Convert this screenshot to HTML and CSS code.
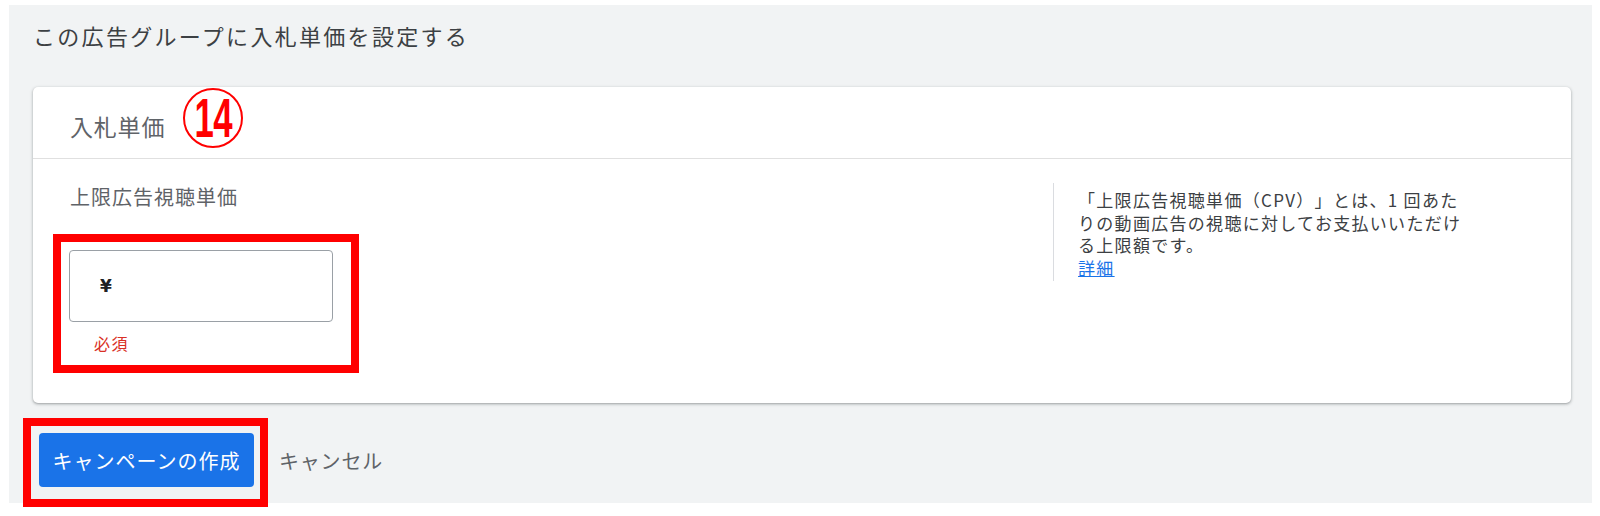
FILE: index.html
```html
<!DOCTYPE html>
<html lang="ja">
<head>
<meta charset="utf-8">
<title>入札単価</title>
<link rel="stylesheet" href="styles.css">
</head>
<body>
<div class="page">
  <h1 class="title">この広告グループに入札単価を設定する</h1>
  <section class="card">
    <div class="card-head">
      <span class="card-title">入札単価</span>
      <span class="badge"><span class="badge-num">14</span></span>
    </div>
    <div class="card-body">
      <div class="field-col">
        <div class="label">上限広告視聴単価</div>
        <div class="field">
          <div class="input"><span class="currency">¥</span></div>
          <div class="req">必須</div>
          <span class="annot annot-field"></span>
        </div>
      </div>
      <aside class="help">
        <p class="help-text">「上限広告視聴単価（CPV）」とは、1 回あた<br>りの動画広告の視聴に対してお支払いいただけ<br>る上限額です。<br><a class="help-link" href="#">詳細</a></p>
      </aside>
    </div>
  </section>
  <div class="actions">
    <div class="primary-wrap">
      <button class="btn-primary" type="button">キャンペーンの作成</button>
      <span class="annot annot-btn"></span>
    </div>
    <button class="btn-text" type="button">キャンセル</button>
  </div>
</div>
</body>
</html>
```
FILE: styles.css
```css
* { box-sizing: border-box; }

html, body {
  margin: 0;
  padding: 0;
  background: #ffffff;
}

body {
  font-family: "Noto Sans CJK JP", "Noto Sans", sans-serif;
  color: #3c4043;
  text-spacing-trim: space-all;
}

.page {
  margin: 5px 8px 13px 9px;
  background: #f1f3f4;
  padding: 15px 21px 16px 24px;
}

.title {
  margin: 0;
  font-size: 22px;
  font-weight: 400;
  line-height: 30px;
  letter-spacing: 2.3px;
  color: #3c4043;
}

.card {
  margin-top: 37px;
  background: #ffffff;
  border-radius: 5px;
  box-shadow: 0 1px 2px 0 rgba(60, 64, 67, 0.3), 0 1px 3px 1px rgba(60, 64, 67, 0.15);
}

.card-head {
  height: 72px;
  display: flex;
  align-items: center;
  padding-left: 37px;
  border-bottom: 1px solid #e0e0e0;
}

.card-title {
  font-size: 23px;
  letter-spacing: 0.8px;
  line-height: 30px;
  color: #5f6368;
  padding-top: 6px;
}

.badge {
  margin-left: 18px;
  margin-top: -10px;
  width: 60px;
  height: 60px;
  border: 2px solid #ff0000;
  border-radius: 50%;
  display: flex;
  align-items: center;
  justify-content: center;
}

.badge-num {
  font-family: "Liberation Sans", Arial, sans-serif;
  font-weight: 700;
  font-size: 56px;
  line-height: 1;
  color: #ff0000;
  transform: scaleX(0.62);
  letter-spacing: -1px;
}

.card-body {
  display: grid;
  grid-template-columns: 1fr 518px;
  padding: 25px 0 49px 37px;
}

.label {
  font-size: 20px;
  letter-spacing: 1px;
  line-height: 26px;
  color: #5f6368;
}

.field {
  position: relative;
  width: 264px;
  margin-top: 40px;
  margin-left: -1px;
}

.input {
  height: 72px;
  border: 1px solid #9aa0a6;
  border-radius: 4px;
  display: flex;
  align-items: center;
  padding-left: 30px;
}

.currency {
  font-family: "DejaVu Sans", "Noto Sans", sans-serif;
  font-size: 17px;
  font-weight: 700;
  color: #202124;
}

.req {
  margin-top: 10px;
  padding-left: 25px;
  font-size: 16px;
  letter-spacing: 1.5px;
  line-height: 22px;
  color: #d93025;
}

.annot {
  position: absolute;
  border: 8px solid #ff0000;
  pointer-events: none;
}

.annot-field {
  left: -16px;
  top: -16px;
  right: -26px;
  bottom: -19px;
}

.help {
  align-self: start;
  margin-top: -1px;
  border-left: 1px solid #dadce0;
  padding: 6px 0 2px 24px;
}

.help-text {
  margin: 0;
  font-size: 17px;
  letter-spacing: 1.3px;
  line-height: 22.5px;
  color: #3c4043;
}

.help-link {
  color: #1a73e8;
  text-decoration: underline;
}

.actions {
  margin-top: 30px;
  display: flex;
  align-items: center;
}

.primary-wrap {
  position: relative;
  margin-left: 6px;
}

.btn-primary {
  display: block;
  width: 215px;
  height: 54px;
  border: none;
  border-radius: 4px;
  background: #1a73e8;
  color: #ffffff;
  font-family: "Noto Sans CJK JP", "Noto Sans", sans-serif;
  font-size: 20px;
  letter-spacing: 1px;
  padding: 0;
  cursor: pointer;
}

.annot-btn {
  left: -16px;
  top: -15px;
  right: -14px;
  bottom: -20px;
}

.btn-text {
  margin-left: 25px;
  border: none;
  background: transparent;
  padding: 0;
  font-family: "Noto Sans CJK JP", "Noto Sans", sans-serif;
  font-size: 20px;
  letter-spacing: 0.8px;
  color: #5f6368;
  cursor: pointer;
}
```
